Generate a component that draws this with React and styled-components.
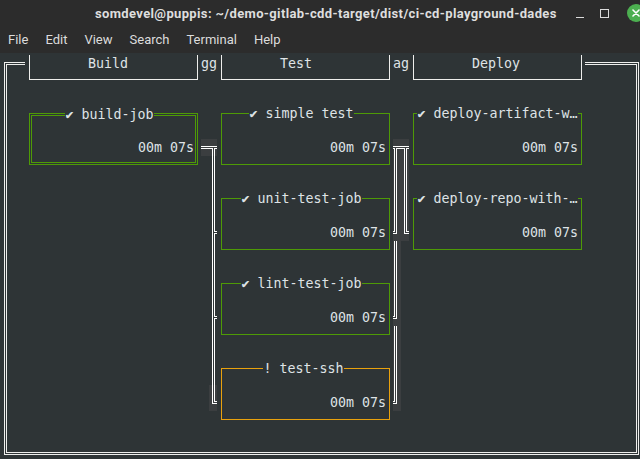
import React from "react";
import styled, { createGlobalStyle } from "styled-components";

const GlobalStyle = createGlobalStyle`
  html, body {
    margin: 0;
    padding: 0;
    background: #2e3436;
    overflow: hidden;
  }
  #root {
    width: 640px;
    height: 459px;
  }
`;

const GREEN = "#4e9a06";
const ORANGE = "#e8a10d";
const TERM_BG = "#2e3436";

const Window = styled.div`
  width: 640px;
  height: 459px;
  display: flex;
  flex-direction: column;
  background: #2c2c2c;
  overflow: hidden;
`;

const TitleBar = styled.div`
  height: 26px;
  flex: none;
  display: flex;
  align-items: center;
  padding-left: 95px;
  font-family: Roboto, "Noto Sans", sans-serif;
  font-weight: 700;
  font-size: 13px;
  letter-spacing: 0.36px;
  color: #dedede;
`;

const TitleText = styled.div`
  white-space: nowrap;
`;

const Controls = styled.div`
  margin-left: auto;
  margin-right: -5px;
  display: flex;
  align-items: center;
`;

const MinButton = styled.span`
  width: 8px;
  height: 1px;
  margin-top: 9px;
  margin-right: 16px;
  background: #dcdcdc;
`;

const MaxButton = styled.span`
  width: 9px;
  height: 9px;
  box-sizing: border-box;
  border: 1px solid #dcdcdc;
  margin-right: 18px;
`;

const CloseButton = styled.span`
  width: 18px;
  height: 18px;
  border-radius: 50%;
  background: #4caf50;
  display: flex;
  align-items: center;
  justify-content: center;
`;

const MenuBar = styled.div`
  height: 27px;
  flex: none;
  display: flex;
  align-items: center;
  gap: 17px;
  padding-left: 8px;
  font-family: Roboto, "Noto Sans", sans-serif;
  font-size: 13px;
  color: #dcdcdc;
`;

const Terminal = styled.div`
  flex: 1;
  background: ${TERM_BG};
  padding: 9px 0 0 4px;
  font-family: "DejaVu Sans Mono", monospace;
  font-size: 13.3px;
  line-height: 17px;
  color: #dfe3e6;
`;

const Frame = styled.div`
  width: 635px;
  height: 393px;
  box-sizing: border-box;
  border: 3px double #eeeeec;
  display: flex;
  flex-direction: column;
`;

const Header = styled.div`
  margin: -10px 0 0 18px;
  width: 560px;
  height: 25px;
  box-sizing: border-box;
  padding: 0 3px 0 4px;
  display: flex;
  background: ${TERM_BG};
`;

const Tab = styled.div`
  width: 169px;
  height: 25px;
  box-sizing: border-box;
  border: 1px solid #eeeeec;
  border-top: none;
  padding-left: 58px;
  white-space: pre;
`;

const TabGap = styled.div`
  width: 23px;
  padding-left: 3px;
  box-sizing: border-box;
`;

const Board = styled.div`
  display: flex;
  padding-left: 22px;
`;

const Column = styled.div`
  width: 169px;
  padding-top: 33px;
  display: flex;
  flex-direction: column;
  gap: 33px;
`;

const Connector = styled.svg`
  display: block;
  flex: none;
  fill: #ffffff;
  shape-rendering: crispEdges;
`;

const Card = styled.div`
  position: relative;
  height: 52px;
  box-sizing: border-box;
  border-style: ${(p) => (p.$double ? "double" : "solid")};
  border-width: ${(p) => (p.$double ? "3px" : "1px")};
  border-color: ${(p) => p.$color};
  padding: ${(p) => (p.$double ? "23px 1px 0 0" : "25px 3px 0 0")};
  text-align: right;
  white-space: pre;
`;

const CardTitle = styled.div`
  position: absolute;
  left: 0;
  right: 0;
  top: ${(p) => (p.$double ? "-10px" : "-9px")};
  padding-right: ${(p) => p.$shift}px;
  display: flex;
  justify-content: center;
`;

const TitleLabel = styled.span`
  background: ${TERM_BG};
  white-space: pre;
`;

const H = (x1, x2, y) => <rect key={`h${x1}-${x2}-${y}`} x={x1} y={y} width={x2 - x1} height="1" />;
const V = (x, y1, y2) => <rect key={`v${x}-${y1}-${y2}`} x={x} y={y1} width="1" height={y2 - y1} />;

const stages = [
  {
    name: "Build",
    jobs: [{ name: "✔ build-job", color: GREEN, double: true, shift: 8 }],
  },
  {
    name: "Test",
    jobs: [
      { name: "✔ simple test", color: GREEN, shift: 8 },
      { name: "✔ unit-test-job", color: GREEN, shift: 8 },
      { name: "✔ lint-test-job", color: GREEN, shift: 8 },
      { name: "! test-ssh", color: ORANGE, shift: 4 },
    ],
  },
  {
    name: "Deploy",
    jobs: [
      { name: "✔ deploy-artifact-w…", color: GREEN, shift: 0 },
      { name: "✔ deploy-repo-with-…", color: GREEN, shift: 0 },
    ],
  },
];

const BuildToTest = () => (
  <Connector width="23" height="340" viewBox="0 80 23 340">
    <rect x="3" y="139" width="16" height="17" fill="#3b3e40" />
    <rect x="11" y="385" width="8" height="26" fill="#3b3e40" />
    {H(3, 19, 146)}
    {H(3, 15, 148)}
    {H(16, 19, 148)}
    {V(14, 148, 404)}
    {H(14, 19, 403)}
    {V(16, 148, 232)}
    {H(16, 19, 231)}
    {H(16, 19, 233)}
    {V(16, 233, 317)}
    {H(16, 19, 316)}
    {H(16, 19, 318)}
    {V(16, 318, 402)}
    {H(16, 19, 401)}
  </Connector>
);

const TestToDeploy = () => (
  <Connector width="23" height="340" viewBox="0 80 23 340">
    <rect x="3" y="139" width="16" height="102" fill="#3b3e40" />
    <rect x="3" y="241" width="8" height="170" fill="#3b3e40" />
    {H(3, 19, 146)}
    {H(3, 5, 148)}
    {H(6, 15, 148)}
    {H(16, 19, 148)}
    {V(4, 148, 232)}
    {H(3, 5, 231)}
    {V(6, 148, 234)}
    {H(3, 7, 233)}
    {V(14, 148, 234)}
    {H(14, 19, 233)}
    {V(16, 148, 232)}
    {H(16, 19, 231)}
    {V(4, 241, 317)}
    {H(3, 5, 316)}
    {V(6, 241, 319)}
    {H(3, 7, 318)}
    {V(4, 326, 402)}
    {H(3, 5, 401)}
    {V(6, 326, 404)}
    {H(3, 7, 403)}
  </Connector>
);

const JobCard = ({ job }) => (
  <Card $color={job.color} $double={job.double}>
    <CardTitle $double={job.double} $shift={job.shift}>
      <TitleLabel>{job.name}</TitleLabel>
    </CardTitle>
    00m 07s
  </Card>
);

const StageColumn = ({ stage }) => (
  <Column>
    {stage.jobs.map((job) => (
      <JobCard key={job.name} job={job} />
    ))}
  </Column>
);

export default function App() {
  return (
    <>
      <GlobalStyle />
      <Window>
        <TitleBar>
          <TitleText>somdevel@puppis: ~/demo-gitlab-cdd-target/dist/ci-cd-playground-dades</TitleText>
          <Controls>
            <MinButton />
            <MaxButton />
            <CloseButton>
              <svg width="8" height="8" viewBox="0 0 8 8">
                <path d="M1 1L7 7M7 1L1 7" stroke="#fff" strokeWidth="1.6" strokeLinecap="round" />
              </svg>
            </CloseButton>
          </Controls>
        </TitleBar>
        <MenuBar>
          <span>File</span>
          <span>Edit</span>
          <span>View</span>
          <span>Search</span>
          <span>Terminal</span>
          <span>Help</span>
        </MenuBar>
        <Terminal>
          <Frame>
            <Header>
              <Tab>Build</Tab>
              <TabGap>gg</TabGap>
              <Tab>Test</Tab>
              <TabGap>ag</TabGap>
              <Tab>Deploy</Tab>
            </Header>
            <Board>
              <StageColumn stage={stages[0]} />
              <BuildToTest />
              <StageColumn stage={stages[1]} />
              <TestToDeploy />
              <StageColumn stage={stages[2]} />
            </Board>
          </Frame>
        </Terminal>
      </Window>
    </>
  );
}
